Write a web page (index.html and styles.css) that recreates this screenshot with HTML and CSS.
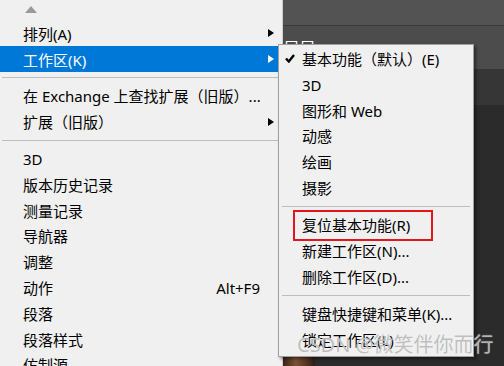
FILE: index.html
```html
<!DOCTYPE html>
<html lang="zh-CN">
<head>
<meta charset="utf-8">
<title>工作区菜单</title>
<link rel="stylesheet" href="styles.css">
</head>
<body>
<div class="desk">
  <div class="band band-top"></div>
  <div class="band-line"></div>
  <div class="band band-mid"><span class="ghost">口口</span></div>
  <div class="band band-dark1"></div>
  <div class="band band-dark2"><div class="thumb"></div></div>
</div>

<div class="menu main-menu">
  <div class="scroll-up"><span class="up-tri"></span></div>
  <div class="row"><span class="gut"></span><span class="label">排列(A)</span><span class="arr-col"><span class="tri"></span></span></div>
  <div class="row active"><span class="gut"></span><span class="label">工作区(K)</span><span class="arr-col"><span class="tri"></span></span></div>
  <div class="sep"></div>
  <div class="row"><span class="gut"></span><span class="label">在 Exchange 上查找扩展（旧版）...</span><span class="arr-col"></span></div>
  <div class="row"><span class="gut"></span><span class="label">扩展（旧版）</span><span class="arr-col"><span class="tri"></span></span></div>
  <div class="sep"></div>
  <div class="row"><span class="gut"></span><span class="label">3D</span><span class="arr-col"></span></div>
  <div class="row"><span class="gut"></span><span class="label">版本历史记录</span><span class="arr-col"></span></div>
  <div class="row"><span class="gut"></span><span class="label">测量记录</span><span class="arr-col"></span></div>
  <div class="row"><span class="gut"></span><span class="label">导航器</span><span class="arr-col"></span></div>
  <div class="row"><span class="gut"></span><span class="label">调整</span><span class="arr-col"></span></div>
  <div class="row"><span class="gut"></span><span class="label">动作</span><span class="shortcut">Alt+F9</span><span class="arr-col"></span></div>
  <div class="row"><span class="gut"></span><span class="label">段落</span><span class="arr-col"></span></div>
  <div class="row"><span class="gut"></span><span class="label">段落样式</span><span class="arr-col"></span></div>
  <div class="row"><span class="gut"></span><span class="label">仿制源</span><span class="arr-col"></span></div>
</div>

<div class="menu sub-menu">
  <div class="row"><span class="gut"><svg class="check" width="10" height="9" viewBox="0 0 10 9"><path d="M1 4.5 L3.8 7.5 L9 1" fill="none" stroke="#000" stroke-width="2.4"/></svg></span><span class="label">基本功能（默认）(E)</span></div>
  <div class="row"><span class="gut"></span><span class="label">3D</span></div>
  <div class="row"><span class="gut"></span><span class="label">图形和 Web</span></div>
  <div class="row"><span class="gut"></span><span class="label">动感</span></div>
  <div class="row"><span class="gut"></span><span class="label">绘画</span></div>
  <div class="row"><span class="gut"></span><span class="label">摄影</span></div>
  <div class="sep sub-sep"></div>
  <div class="row"><span class="gut"></span><span class="label">复位基本功能(R)</span></div>
  <div class="row"><span class="gut"></span><span class="label">新建工作区(N)...</span></div>
  <div class="row"><span class="gut"></span><span class="label">删除工作区(D)...</span></div>
  <div class="sep sub-sep"></div>
  <div class="row"><span class="gut"></span><span class="label">键盘快捷键和菜单(K)...</span></div>
  <div class="row"><span class="gut"></span><span class="label">锁定工作区(L)</span></div>
  <div class="redbox"></div>
</div>

<div class="watermark">CSDN @微笑伴你而行</div>
</body>
</html>
```

FILE: styles.css
```css
html, body {
  margin: 0;
  padding: 0;
}
body {
  width: 504px;
  height: 366px;
  overflow: hidden;
  position: relative;
  background: #2b2b2b;
  font-family: "Noto Sans", "Noto Sans CJK SC", sans-serif;
  font-size: 15px;
  color: #000;
}

/* background application */
.desk {
  display: flex;
  flex-direction: column;
  height: 366px;
}
.band-top {
  height: 26px;
  background: #535353;
}
.band-line {
  height: 1px;
  background: #383838;
}
.band-mid {
  height: 44px;
  background: #4c4c4c;
  padding-left: 284px;
  box-sizing: border-box;
  overflow: hidden;
}
.ghost {
  display: inline-block;
  color: #fff;
  font-size: 15px;
  line-height: 15px;
  margin-top: 13px;
  letter-spacing: 1px;
}
.band-dark1 {
  height: 37px;
  background: #363636;
}
.band-dark2 {
  flex: 1;
  background: #2b2b2b;
  padding-left: 283px;
  padding-top: 249px;
}
.thumb {
  width: 32px;
  height: 12px;
  background: linear-gradient(90deg, #3a2416, #7a5236 40%, #5a3a26 70%, #2e1e14);
}

/* menus */
.menu {
  position: absolute;
  background: #f0f0f0;
  box-sizing: border-box;
}
.main-menu {
  left: 0;
  top: 0;
  width: 283px;
  height: 380px;
  border-right: 1px solid #cfcfcf;
}
.sub-menu {
  left: 278px;
  top: 44px;
  width: 196px;
  height: 313px;
  border: 1px solid #a0a0a0;
  padding-top: 0.6px;
  box-shadow: 2px 2px 3px rgba(0, 0, 0, 0.45);
}

.scroll-up {
  height: 20.4px;
  display: flex;
  align-items: flex-start;
  padding-left: 25px;
  padding-top: 6px;
  box-sizing: border-box;
}
.up-tri {
  width: 0;
  height: 0;
  border-left: 6.5px solid transparent;
  border-right: 6.5px solid transparent;
  border-bottom: 7px solid #9a9a9a;
}

.row {
  height: 25.8px;
  display: flex;
  align-items: center;
  white-space: nowrap;
  line-height: 1;
}
.row .label {
  flex: 1;
  padding-top: 2px;
}
.gut {
  width: 23px;
  flex: none;
  display: flex;
  align-items: center;
}
.check {
  margin-left: 6px;
  margin-top: 1px;
}
.shortcut {
  padding-top: 2px;
}
.arr-col {
  width: 22px;
  flex: none;
  display: flex;
  align-items: center;
}
.tri {
  margin-left: 8px;
  width: 0;
  height: 0;
  border-top: 4.5px solid transparent;
  border-bottom: 4.5px solid transparent;
  border-left: 6px solid #000;
}
.row.active {
  background: #0078d7;
  color: #fff;
}
.row.active .tri {
  border-left-color: #fff;
}

.sep {
  height: 11px;
  display: flex;
  align-items: center;
  padding: 0 2px;
}
.sep::before {
  content: "";
  flex: 1;
  height: 1px;
  background: #bdbdbd;
}
.sub-sep {
  height: 11.5px;
  padding: 0 3px;
}

/* annotation overlay */
.redbox {
  position: absolute;
  left: 14px;
  top: 165px;
  width: 140px;
  height: 31px;
  border: 2px solid #e3161e;
  box-sizing: border-box;
}

.watermark {
  position: absolute;
  left: 297px;
  top: 332px;
  font-size: 20px;
  line-height: 26px;
  white-space: nowrap;
  color: rgba(180, 180, 180, 0.85);
  text-shadow: 0 0 1px rgba(255, 255, 255, 0.7);
}
```
